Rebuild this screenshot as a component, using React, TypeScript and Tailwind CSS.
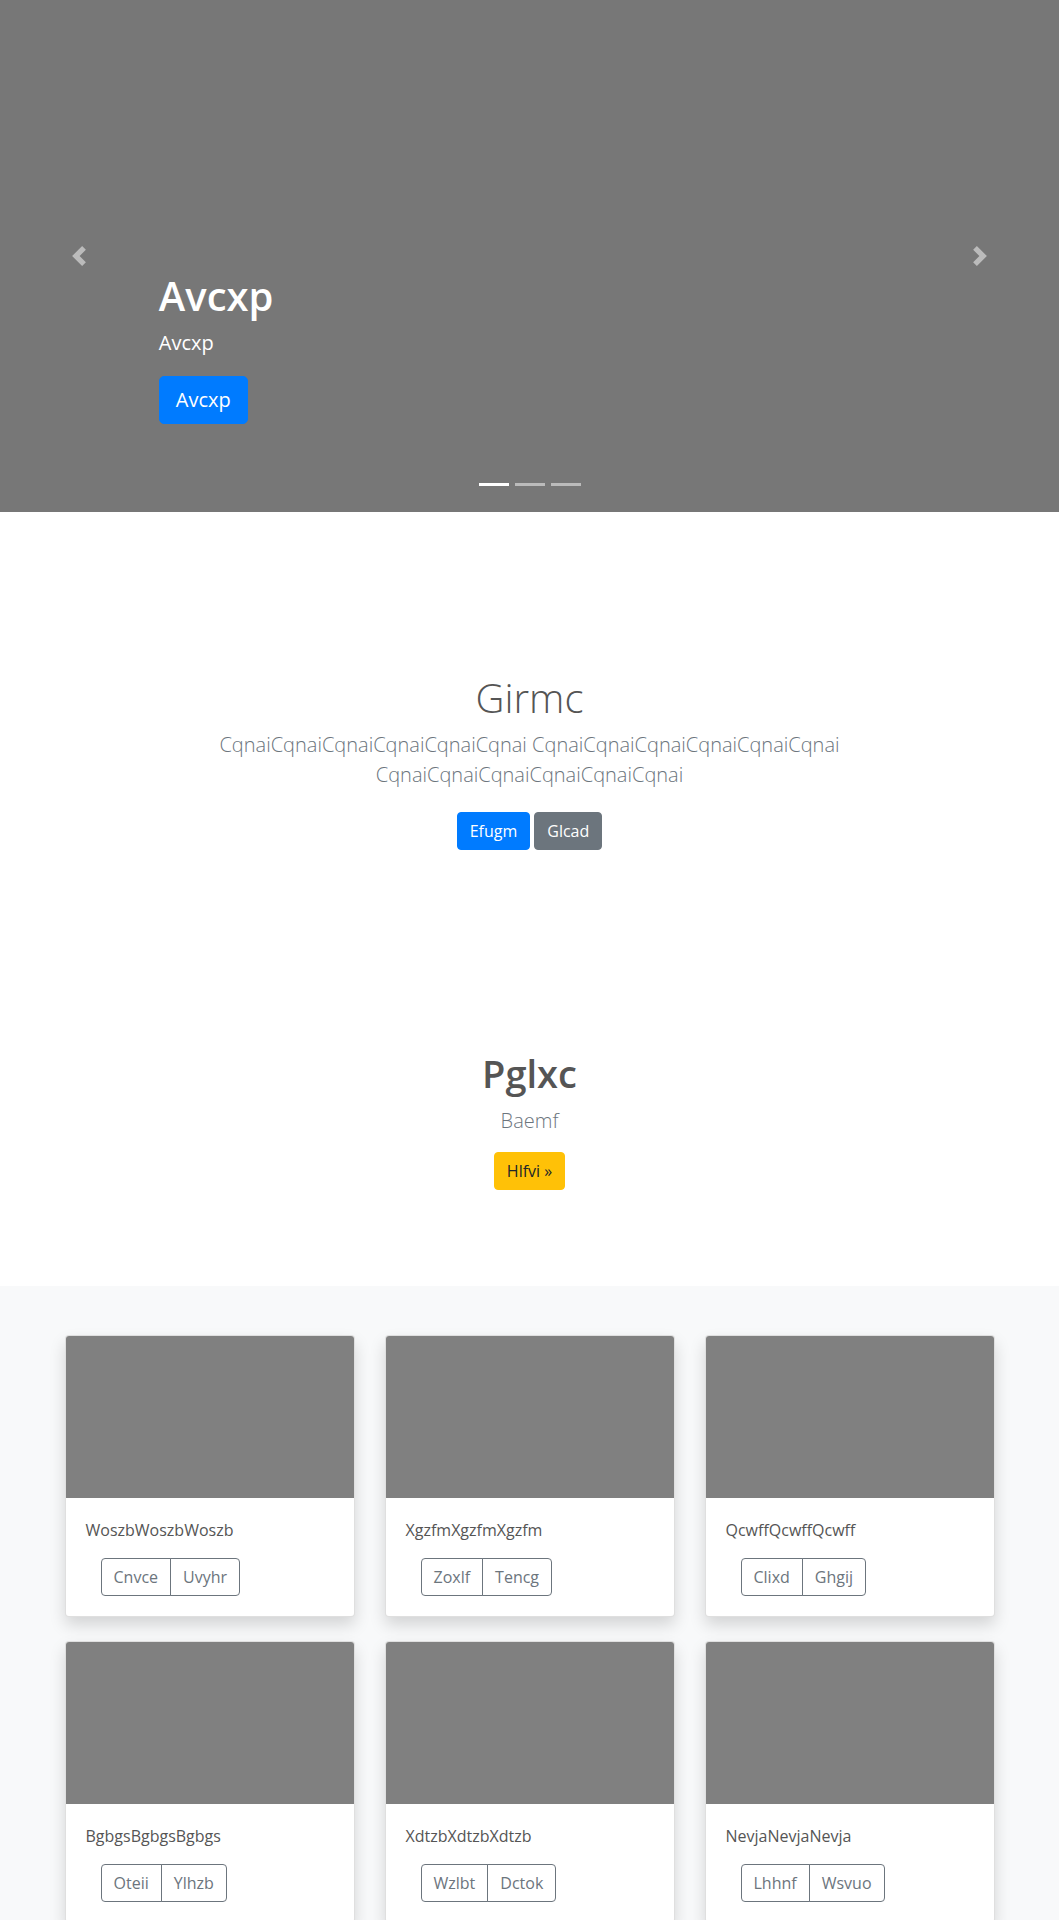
import React from "react";

interface AlbumItem {
  id: number;
  text: string;
  left: string;
  right: string;
}

const items: AlbumItem[] = [
  { id: 1, text: "WoszbWoszbWoszb", left: "Cnvce", right: "Uvyhr" },
  { id: 2, text: "XgzfmXgzfmXgzfm", left: "Zoxlf", right: "Tencg" },
  { id: 3, text: "QcwffQcwffQcwff", left: "Clixd", right: "Ghgij" },
  { id: 4, text: "BgbgsBgbgsBgbgs", left: "Oteii", right: "Ylhzb" },
  { id: 5, text: "XdtzbXdtzbXdtzb", left: "Wzlbt", right: "Dctok" },
  { id: 6, text: "NevjaNevjaNevja", left: "Lhhnf", right: "Wsvuo" },
];

const PrevIcon = () => (
  <svg width="20" height="20" viewBox="0 0 8 8" fill="#fff">
    <path d="M5.25 0l-4 4 4 4 1.5-1.5-2.5-2.5 2.5-2.5-1.5-1.5z" />
  </svg>
);

const NextIcon = () => (
  <svg width="20" height="20" viewBox="0 0 8 8" fill="#fff">
    <path d="M2.75 0l-1.5 1.5 2.5 2.5-2.5 2.5 1.5 1.5 4-4-4-4z" />
  </svg>
);

const Carousel = () => {
  return (
    <div className="relative h-[512px] bg-[#777] overflow-hidden">
      {/* caption */}
      <div className="absolute left-[15%] right-[15%] top-[272px] text-left text-white">
        <h1 className="text-[40px] leading-[48px] font-semibold mb-2">Avcxp</h1>
        <p className="text-[20px] leading-[30px] mb-[18px]">Avcxp</p>
        <a
          href="#"
          className="inline-block bg-[#007bff] border border-[#007bff] text-white text-[20px] leading-[30px] px-4 py-2 rounded-[5px]"
        >
          Avcxp
        </a>
      </div>

      <a href="#" className="absolute left-0 top-0 bottom-0 w-[15%] flex items-center justify-center opacity-50">
        <PrevIcon />
      </a>
      <a href="#" className="absolute right-0 top-0 bottom-0 w-[15%] flex items-center justify-center opacity-50">
        <NextIcon />
      </a>

      <ol className="absolute left-0 right-0 bottom-[26px] flex justify-center gap-[6px]">
        <li className="w-[30px] h-[3px] bg-white" />
        <li className="w-[30px] h-[3px] bg-white/50" />
        <li className="w-[30px] h-[3px] bg-white/50" />
      </ol>
    </div>
  );
};

const AlbumCard: React.FC<{ item: AlbumItem }> = ({ item }) => {
  return (
    <div className="bg-white border border-black/[0.125] rounded overflow-hidden shadow-[0_0.5rem_1rem_rgba(0,0,0,0.15)]">
      <div className="h-[162px] bg-[#808080]" />
      <div className="p-5">
        <p className="text-base leading-6 mb-4 text-[#555]">{item.text}</p>
        <div className="flex ml-[15px]">
          <button className="px-3 py-1.5 text-base leading-6 text-[#6c757d] border border-[#6c757d] rounded-l">
            {item.left}
          </button>
          <button className="-ml-px px-3 py-1.5 text-base leading-6 text-[#6c757d] border border-[#6c757d] rounded-r">
            {item.right}
          </button>
        </div>
      </div>
    </div>
  );
};

export default function App() {
  return (
    <div className="bg-white text-[#555]" style={{ fontFamily: '"Open Sans", "Noto Sans", sans-serif' }}>
      <Carousel />

      <section className="pt-[162px] pb-[104px] text-center">
        <h1 className="text-[40px] leading-[48px] font-light text-[#555] mb-2">Girmc</h1>
        <p className="max-w-[700px] mx-auto text-[20px] leading-[30px] font-light text-[#6c757d]">
          CqnaiCqnaiCqnaiCqnaiCqnaiCqnai CqnaiCqnaiCqnaiCqnaiCqnaiCqnai CqnaiCqnaiCqnaiCqnaiCqnaiCqnai
        </p>
        <div className="mt-[22px] flex justify-center gap-1">
          <a href="#" className="inline-block px-3 py-1.5 text-base leading-6 text-white bg-[#007bff] border border-[#007bff] rounded">
            Efugm
          </a>
          <a href="#" className="inline-block px-3 py-1.5 text-base leading-6 text-white bg-[#6c757d] border border-[#6c757d] rounded">
            Glcad
          </a>
        </div>
      </section>

      <section className="pt-[96px] pb-[96px] text-center">
        <h2 className="text-[38px] leading-[46px] font-semibold text-[#555] mb-[10px]">Pglxc</h2>
        <p className="text-[20px] leading-[30px] font-light text-[#6c757d] mb-4">Baemf</p>
        <a href="#" className="inline-block px-3 py-1.5 text-base leading-6 text-[#212529] bg-[#ffc107] border border-[#ffc107] rounded">
          Hlfvi »
        </a>
      </section>

      <div className="bg-[#f8f9fa] pt-[49px] pb-12">
        <div className="w-[960px] mx-auto px-[15px]">
          <div className="grid grid-cols-3 gap-x-[30px] gap-y-6">
            {items.map((item) => (
              <AlbumCard key={item.id} item={item} />
            ))}
          </div>
        </div>
      </div>
    </div>
  );
}
